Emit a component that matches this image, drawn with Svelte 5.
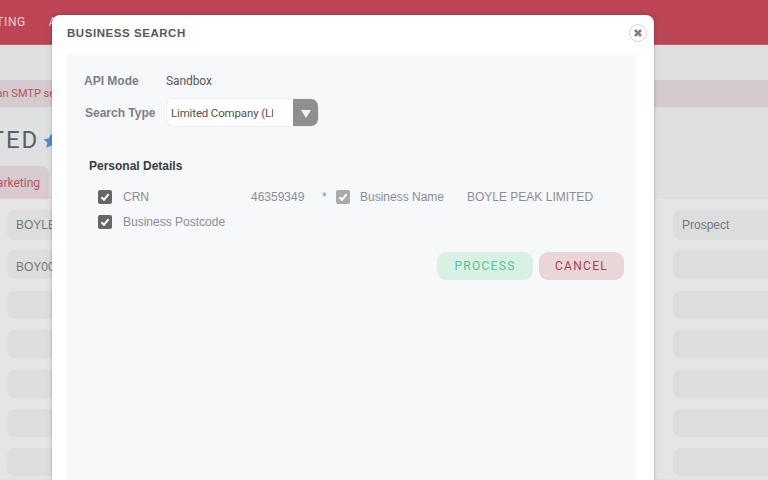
<script>
  const rows = [
    { left: 'BOYLE PEAK LIMITED', right: 'Prospect', h: 30, gap: 10 },
    { left: 'BOY0001', right: '', h: 29, gap: 12 },
    { left: '', right: '', h: 28, gap: 11 },
    { left: '', right: '', h: 28, gap: 12 },
    { left: '', right: '', h: 28, gap: 11 },
    { left: '', right: '', h: 28, gap: 11 },
    { left: '', right: '', h: 28, gap: 0 }
  ];
</script>

<div class="page">
  <header class="topbar">
    <span class="nav nav-first">MARKETING</span>
    <span class="nav">ACCOUNTS</span>
  </header>
  <div class="alert">You have not set up an SMTP server for sending email from the system</div>
  <div class="title">LIMITED<svg class="star" width="16" height="16" viewBox="0 0 24 24"><path d="M12 1l3.4 7.3 7.9 1-5.8 5.4 1.5 7.9L12 18.7l-7 3.9 1.5-7.9L.7 9.3l7.9-1z" fill="#4f8fc6"/></svg></div>
  <div class="tabs"><div class="tab"><span>Marketing</span></div></div>
  <div class="content">
    {#each rows as row}
      <div class="row" style="margin-bottom: {row.gap}px">
        <div class="cell cell-left" style="height: {row.h}px">{row.left}</div>
        <div class="cell cell-right" style="height: {row.h}px">{row.right}</div>
      </div>
    {/each}
  </div>

  <div class="modal">
    <div class="modal-head">
      <h2>BUSINESS SEARCH</h2>
      <button class="close" aria-label="Close">
        <svg width="10" height="10" viewBox="0 0 10 10"><path d="M2 2L8 8M8 2L2 8" stroke="#808080" stroke-width="2.6"/></svg>
      </button>
    </div>
    <div class="panel">
      <div class="form-row mode">
        <span class="label">API Mode</span>
        <span class="value">Sandbox</span>
      </div>
      <div class="form-row type">
        <span class="label label-type">Search Type</span>
        <div class="select">
          <span class="select-text">Limited Company (LIMITED)</span>
          <span class="select-btn"><i class="arrow"></i></span>
        </div>
      </div>
      <h3>Personal Details</h3>
      <div class="check-row first">
        <span class="check"><svg width="14" height="14" viewBox="0 0 14 14"><path d="M3.4 7.2L6 9.8L10.6 4.2" fill="none" stroke="#fff" stroke-width="2"/></svg></span>
        <span class="f-label crn">CRN</span>
        <span class="f-value num">46359349</span>
        <span class="req">*</span>
        <span class="check disabled"><svg width="14" height="14" viewBox="0 0 14 14"><path d="M3.4 7.2L6 9.8L10.6 4.2" fill="none" stroke="#fff" stroke-width="2"/></svg></span>
        <span class="f-label bname">Business Name</span>
        <span class="f-value">BOYLE PEAK LIMITED</span>
      </div>
      <div class="check-row">
        <span class="check"><svg width="14" height="14" viewBox="0 0 14 14"><path d="M3.4 7.2L6 9.8L10.6 4.2" fill="none" stroke="#fff" stroke-width="2"/></svg></span>
        <span class="f-label">Business Postcode</span>
      </div>
      <div class="actions">
        <button class="btn process">PROCESS</button>
        <button class="btn cancel">CANCEL</button>
      </div>
    </div>
  </div>
</div>

<style>
  :global(body) { margin: 0; }
  .page {
    position: relative;
    width: 768px;
    height: 480px;
    overflow: hidden;
    background: #dfe0e2;
    font-family: "Liberation Sans", Arial, sans-serif;
  }
  .topbar {
    height: 45px;
    box-sizing: border-box;
    background: #bc4655;
    border-bottom: 1px solid #c4606c;
    display: flex;
    align-items: center;
    margin-left: -47px;
    gap: 23px;
    color: #e9d2d2;
    font-family: Roboto, sans-serif;
    font-size: 12px;
    letter-spacing: 0.6px;
  }
  .alert {
    margin-top: 35px;
    height: 27px;
    background: #d5cacd;
    color: #b5525f;
    font-family: Roboto, sans-serif;
    font-size: 11px;
    line-height: 27px;
    white-space: nowrap;
    text-indent: -102px;
    overflow: hidden;
  }
  .title {
    margin-top: 18px;
    margin-left: -65px;
    height: 31px;
    font-family: Roboto, sans-serif;
    font-size: 24px;
    line-height: 30px;
    letter-spacing: 2px;
    color: #5c5e62;
    white-space: nowrap;
  }
  .star { margin-left: 4px; vertical-align: -1px; }
  .tabs { height: 33px; margin-top: 10px; }
  .tab {
    box-sizing: border-box;
    width: 49px;
    height: 33px;
    background: #d7cbce;
    border-radius: 0 8px 0 0;
    color: #b5525f;
    font-family: Roboto, sans-serif;
    font-size: 12px;
    padding-right: 9px;
    overflow: hidden;
    white-space: nowrap;
    display: flex;
    align-items: center;
    justify-content: flex-end;
  }
  .tab span { flex: none; }
  .content {
    background: #e5e5e5;
    height: 280px;
    box-sizing: border-box;
    padding-top: 11px;
    display: flex;
    flex-direction: column;
  }
  .row { display: flex; justify-content: space-between; padding-left: 7px; }
  .row:nth-child(2) .cell { padding-top: 5px; }
  .cell {
    background: #dddddd;
    border-radius: 8px;
    box-sizing: border-box;
    color: #74767a;
    font-size: 12px;
    display: flex;
    align-items: center;
    white-space: nowrap;
    overflow: hidden;
  }
  .cell-left { width: 200px; padding-left: 9px; }
  .cell-right { width: 95px; padding-left: 9px; border-radius: 8px 0 0 8px; }

  .modal {
    position: absolute;
    left: 52px;
    top: 15px;
    width: 602px;
    height: 520px;
    background: #fff;
    border-radius: 8px;
    box-shadow: 0 0 3px rgba(0, 0, 0, 0.25), 0 0 10px rgba(0, 0, 0, 0.06);
    box-sizing: border-box;
    padding: 0 18px 0 15px;
  }
  .modal-head {
    height: 40px;
    display: flex;
    align-items: center;
    justify-content: space-between;
    position: relative;
  }
  h2 {
    margin: 0;
    font-size: 11.5px;
    font-weight: 700;
    letter-spacing: 0.55px;
    color: #55575b;
    position: relative;
    top: -2px;
  }
  .close {
    position: absolute;
    right: -11px;
    top: 9px;
    width: 18px;
    height: 18px;
    padding: 0;
    border-radius: 50%;
    border: 1px solid #d4d4d4;
    background: #fff;
    display: flex;
    align-items: center;
    justify-content: center;
  }
  .panel {
    background: #f7f8fa;
    height: 470px;
    box-sizing: border-box;
    padding: 19px 12px 0 17px;
  }
  .form-row { display: flex; align-items: center; }
  .mode { height: 14px; }
  .label {
    font-size: 12px;
    font-weight: 700;
    color: #7d7f88;
    width: 82px;
  }
  .value { font-family: Roboto, sans-serif; font-size: 12px; letter-spacing: -0.1px; color: #55575c; }
  .type { margin-top: 10px; height: 29px; }
  .label-type { padding-left: 1px; width: 81px; }
  .select {
    width: 153px;
    height: 29px;
    box-sizing: border-box;
    background: #fff;
    border: 1px solid #eeeeee;
    border-radius: 8px;
    display: flex;
    overflow: hidden;
  }
  .select-text {
    width: 126px;
    box-sizing: border-box;
    padding-left: 4px;
    font-family: Roboto, sans-serif;
    font-size: 11.5px;
    letter-spacing: -0.15px;
    line-height: 29px;
    color: #55504c;
    white-space: nowrap;
    overflow: hidden;
    clip-path: inset(0 20px 0 0);
  }
  .select-btn {
    flex: 1;
    background: #8f8f8f;
    display: flex;
    align-items: center;
    justify-content: center;
  }
  .arrow {
    width: 0;
    height: 0;
    border-left: 5.5px solid transparent;
    border-right: 5.5px solid transparent;
    border-top: 8px solid #f2f2f2;
    margin-top: 2px;
  }
  h3 {
    margin: 31px 0 0 5px;
    font-size: 12px;
    font-weight: 700;
    color: #3a3c40;
    line-height: 16px;
  }
  .check-row {
    display: flex;
    align-items: center;
    height: 14px;
    margin: 11px 0 0 14px;
    color: #8b8d96;
    font-size: 12px;
    white-space: nowrap;
  }
  .check-row.first { margin-top: 16px; }
  .check {
    width: 14px;
    height: 14px;
    background: #666666;
    border-radius: 2px;
    flex: none;
    display: block;
  }
  .check svg { display: block; }
  .check.disabled { background: #aaaaaa; }
  .f-label { margin-left: 11px; }
  .crn { width: 117px; flex: none; margin-right: 11px; }
  .num { width: 71px; }
  .req { width: 14px; }
  .bname { width: 107px; margin-left: 10px; }
  .actions { display: flex; gap: 6px; margin: 23px 0 0 353px; }
  .btn {
    height: 28px;
    border: none;
    border-radius: 9px;
    font-family: Roboto, sans-serif;
    font-size: 12px;
    font-weight: 400;
    letter-spacing: 1.3px;
    padding: 0;
  }
  .process { width: 96px; background: #d9f1e4; color: #55c48a; }
  .cancel { width: 85px; background: #e9d6d8; color: #a93f4b; }
</style>
